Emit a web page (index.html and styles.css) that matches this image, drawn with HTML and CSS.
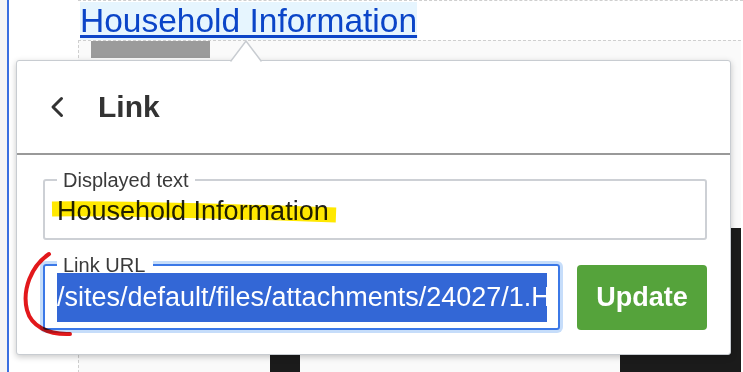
FILE: index.html
```html
<!DOCTYPE html>
<html lang="en">
<head>
  <meta charset="UTF-8">
  <title>Link editor</title>
  <link rel="stylesheet" href="styles.css">
</head>
<body>

<div class="page">
  <div class="gutter"></div>
  <div class="rule"></div>

  <div class="canvas">
    <p class="para"><a class="doc-link" href="#">Household Information</a></p>

    <div class="block">
      <div class="bar"></div>
      <div class="shapes">
        <div class="shape shape-narrow"></div>
        <div class="shape shape-wide"></div>
      </div>
    </div>

    <!-- link popup -->
    <div class="popup">
      <svg class="arrow" width="32" height="22" viewBox="0 0 32 22">
        <polygon points="0.5,22 16,1 31.5,22" fill="#fff"/>
        <polyline points="0.5,21.5 16,1 31.5,21.5" fill="none" stroke="#c8ccd1" stroke-width="1.5"/>
      </svg>

      <div class="popup-head">
        <svg class="back" width="14" height="22" viewBox="0 0 14 22">
          <polyline points="11.5,2.5 3,11 11.5,19.5" fill="none" stroke="#333" stroke-width="3" stroke-linecap="round" stroke-linejoin="round"/>
        </svg>
        <span class="popup-title">Link</span>
      </div>

      <div class="popup-body">
        <fieldset class="field">
          <legend class="field-label">Displayed text</legend>
          <div class="field-input">Household Information</div>
        </fieldset>

        <div class="url-row">
          <fieldset class="field field-focus">
            <legend class="field-label">Link URL</legend>
            <div class="field-input field-url"><span class="selected">/sites/default/files/attachments/24027/1.H</span></div>
          </fieldset>
          <button class="update-btn">Update</button>
        </div>
      </div>
    </div>
  </div>
</div>

<!-- hand drawn annotations -->
<svg class="marks" width="743" height="372" viewBox="0 0 743 372">
  <path d="M52 209 C 120 208, 220 211, 336 215" fill="none" stroke="#ffe800" stroke-width="15"/>
  <path d="M49 254 C 31 266, 22 290, 27 310 C 31 326, 48 335, 70 334" fill="none" stroke="#e2181b" stroke-width="4" stroke-linecap="round"/>
</svg>

</body>
</html>
```

FILE: styles.css
```css
body {
  margin: 0;
  font-family: 'Liberation Sans', Arial, sans-serif;
  background: #fff;
  color: #333;
  overflow: hidden;
  position: relative;
}

.page {
  display: flex;
  height: 372px;
}

.gutter {
  width: 7px;
  background: #f5f5f5;
}

.rule {
  width: 2px;
  background: #3a6fe0;
}

.canvas {
  flex: 1;
  position: relative;
  display: flex;
  flex-direction: column;
}

.para {
  margin: 0 0 0 69px;
  height: 41px;
  padding: 1px 0 0 2px;
  border-top: 1px dashed #cfcfcf;
  box-sizing: border-box;
}

.doc-link {
  display: inline-block;
  font-size: 33.5px;
  line-height: 38px;
  color: #0b45c8;
  background: #e6f5fe;
  text-decoration: underline;
  text-decoration-thickness: 3px;
  text-underline-offset: 3px;
}

.block {
  flex: 1;
  margin: 0 2px 0 69px;
  border-top: 1px dashed #cfcfcf;
  border-left: 1px dashed #cfcfcf;
  background: #fafafa;
}

.bar {
  margin-left: 12px;
  width: 119px;
  height: 17px;
  background: #9b9b9b;
}

.shapes {
  display: flex;
  margin-top: 170px;
  height: 150px;
}

.shape {
  background: #1b1b1b;
}

.shape-narrow {
  margin-left: 191px;
  width: 30px;
}

.shape-wide {
  margin-left: 320px;
  flex: 1;
}

/* popup */
.popup {
  position: absolute;
  left: 7px;
  top: 60px;
  width: 715px;
  box-sizing: border-box;
  background: #fff;
  border: 1px solid #c8ccd1;
  border-radius: 3px;
  box-shadow: 0 2px 6px rgba(0, 0, 0, 0.22);
}

.arrow {
  position: absolute;
  left: 213px;
  top: -21px;
}

.popup-head {
  display: flex;
  align-items: center;
  height: 92px;
  padding-left: 33px;
  gap: 34px;
  border-bottom: 2px solid #999;
}

.back {
  display: block;
}

.popup-title {
  font-size: 30px;
  font-weight: bold;
  color: #333;
}

.popup-body {
  padding: 15px 23px 24px 26px;
  display: flex;
  flex-direction: column;
  gap: 15px;
}

.field {
  margin: 0;
  padding: 0 12px 6px 12px;
  border: 2px solid #cdd0d5;
  border-radius: 3px;
  min-width: 0;
}

.field-label {
  padding: 0 6px;
  font-size: 20px;
  line-height: 20px;
  color: #3a3a3a;
  background: #fff;
}

.field-input {
  height: 42px;
  font-size: 27px;
  line-height: 42px;
  color: #222;
  white-space: nowrap;
  overflow: hidden;
}

.url-row {
  display: flex;
  align-items: flex-end;
  gap: 17px;
}

.field-focus {
  flex: 1;
  padding-right: 11px;
  border-color: #3b78e7;
  box-shadow: 0 0 0 3px #c6ddfa;
}

.field-focus .field-label {
  padding: 0 8px 0 6px;
}

.field-url {
  margin-top: -2px;
  height: 49px;
  line-height: 49px;
  background: #3367d6;
}

.selected {
  color: #fff;
}

.update-btn {
  width: 130px;
  height: 65px;
  border: none;
  border-radius: 4px;
  background: #55a33b;
  color: #fff;
  font-family: 'Liberation Sans', Arial, sans-serif;
  font-size: 27px;
  font-weight: bold;
  cursor: pointer;
}

.marks {
  position: absolute;
  left: 0;
  top: 0;
  pointer-events: none;
  mix-blend-mode: multiply;
}
```
